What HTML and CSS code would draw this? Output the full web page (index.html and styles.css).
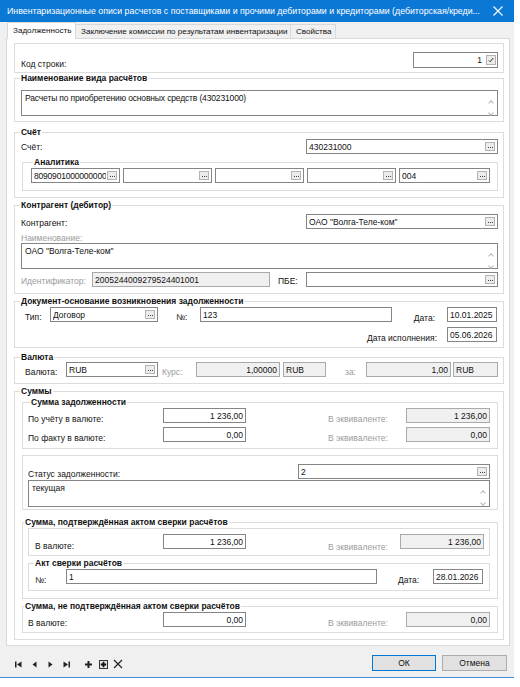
FILE: index.html
```html
<!DOCTYPE html>
<html lang="ru">
<head>
<meta charset="utf-8">
<title>Инвентаризационные описи</title>
<link rel="stylesheet" href="styles.css">
</head>
<body>
<div class="window">
  <div class="titlebar">
    <span class="title">Инвентаризационные описи расчетов с поставщиками и прочими дебиторами и кредиторами (дебиторская/креди...</span>
    <svg class="close" width="10" height="10" viewBox="0 0 10 10"><path d="M0.5 0.5L9.5 9.5M9.5 0.5L0.5 9.5" stroke="#fff" stroke-width="1.1"/></svg>
  </div>
  <div class="tabs">
    <div class="tab active t1">Задолженность</div>
    <div class="tab t2">Заключение комиссии по результатам инвентаризации</div>
    <div class="tab t3">Свойства</div>
  </div>
  <div class="page">
    <div class="frame fa">
      <div class="row r-kod">
        <span class="lbl l-kod">Код строки:</span>
        <div class="inp num w85"><span class="v">1</span><span class="chk"><svg width="6" height="6" viewBox="0 0 6 6"><path d="M0.8 3.4L2.2 4.8L5.2 1" fill="none" stroke="#333" stroke-width="1"/></svg></span></div>
      </div>
    </div>

    <fieldset class="grp g-naim">
      <legend>Наименование вида расчётов</legend>
      <div class="ta ta-naim"><span class="v">Расчеты по приобретению основных средств (430231000)</span><span class="sb"><i class="up"></i><i class="dn"></i></span></div>
    </fieldset>

    <fieldset class="grp g-schet">
      <legend>Счёт</legend>
      <div class="row r-schet">
        <span class="lbl l-285">Счёт:</span>
        <div class="inp w192"><span class="v">430231000</span><span class="dots"></span></div>
      </div>
      <fieldset class="grp sub g-anal">
        <legend class="lg-anal">Аналитика</legend>
        <div class="row r-anal">
          <div class="inp w89"><span class="v tight">8090901000000000</span><span class="dots"></span></div>
          <div class="inp w89 gap3"><span class="v"></span><span class="dots"></span></div>
          <div class="inp w89 gap3"><span class="v"></span><span class="dots"></span></div>
          <div class="inp w89 gap3"><span class="v"></span><span class="dots"></span></div>
          <div class="inp w91 gap3"><span class="v">004</span><span class="dots"></span></div>
        </div>
      </fieldset>
    </fieldset>

    <fieldset class="grp g-kontr">
      <legend>Контрагент (дебитор)</legend>
      <div class="row r-kontr">
        <span class="lbl l-285 lm4">Контрагент:</span>
        <div class="inp w192"><span class="v">ОАО "Волга-Теле-ком"</span><span class="dots"></span></div>
      </div>
      <div class="sublbl">Наименование:</div>
      <div class="ta ro ta-name"><span class="v">ОАО "Волга-Теле-ком"</span><span class="sb"><i class="up"></i><i class="dn"></i></span></div>
      <div class="row r-ident">
        <span class="lbl gray l-ident">Идентификатор:</span>
        <div class="inp ro w178"><span class="v">2005244009279524401001</span></div>
        <span class="lbl l-pbe">ПБЕ:</span>
        <div class="inp w192"><span class="v"></span><span class="dots"></span></div>
      </div>
    </fieldset>

    <fieldset class="grp g-doc">
      <legend>Документ-основание возникновения задолженности</legend>
      <div class="row r-doc1">
        <span class="lbl l-tip">Тип:</span>
        <div class="inp w108"><span class="v">Договор</span><span class="dots"></span></div>
        <span class="lbl l-nom">№:</span>
        <div class="inp w192"><span class="v">123</span></div>
        <span class="lbl l-data">Дата:</span>
        <div class="inp w50 ml12"><span class="v">10.01.2025</span></div>
      </div>
      <div class="row r-doc2">
        <span class="lbl l-dataisp">Дата исполнения:</span>
        <div class="inp w50"><span class="v">05.06.2026</span></div>
      </div>
    </fieldset>

    <fieldset class="grp g-val">
      <legend>Валюта</legend>
      <div class="row r-val">
        <span class="lbl l-val">Валюта:</span>
        <div class="inp w92"><span class="v">RUB</span><span class="dots"></span></div>
        <span class="lbl gray l-kurs">Курс:</span>
        <div class="inp ro num w84"><span class="v">1,00000</span></div>
        <div class="inp ro w43 ml3"><span class="v">RUB</span></div>
        <span class="lbl gray l-za">за:</span>
        <div class="inp ro num w85"><span class="v">1,00</span></div>
        <div class="inp ro w45 ml2"><span class="v">RUB</span></div>
      </div>
    </fieldset>

    <fieldset class="grp g-sum">
      <legend>Суммы</legend>
      <fieldset class="grp sub g-sz">
        <legend class="lg-sz">Сумма задолженности</legend>
        <div class="row">
          <span class="lbl l-sum">По учёту в валюте:</span>
          <div class="inp num w83"><span class="v">1 236,00</span></div>
          <span class="lbl gray l-ekv">В эквиваленте:</span>
          <div class="inp ro num w84"><span class="v">1 236,00</span></div>
        </div>
        <div class="row r-fact">
          <span class="lbl l-sum">По факту в валюте:</span>
          <div class="inp num w83"><span class="v">0,00</span></div>
          <span class="lbl gray l-ekv">В эквиваленте:</span>
          <div class="inp ro num w84"><span class="v">0,00</span></div>
        </div>
      </fieldset>

      <div class="frame sub fs-status">
        <div class="row r-status">
          <span class="lbl l-status">Статус задолженности:</span>
          <div class="inp w192"><span class="v">2</span><span class="dots"></span></div>
        </div>
        <div class="ta ro ta-status"><span class="v">текущая</span><span class="sb"><i class="up"></i><i class="dn"></i></span></div>
      </div>

      <fieldset class="grp sub g-sp">
        <legend class="lg-sp">Сумма, подтверждённая актом сверки расчётов</legend>
        <div class="frame inner fs-sp">
          <div class="row r-sp">
            <span class="lbl l-sp">В валюте:</span>
            <div class="inp num w83"><span class="v">1 236,00</span></div>
            <span class="lbl gray l-ekv2">В эквиваленте:</span>
            <div class="inp ro num w84"><span class="v">1 236,00</span></div>
          </div>
        </div>
        <fieldset class="grp inner g-akt">
          <legend class="lg-akt">Акт сверки расчётов</legend>
          <div class="row">
            <span class="lbl l-aktn">№:</span>
            <div class="inp w311"><span class="v">1</span></div>
            <span class="lbl l-aktd">Дата:</span>
            <div class="inp w50"><span class="v">28.01.2026</span></div>
          </div>
        </fieldset>
      </fieldset>

      <fieldset class="grp sub g-sn">
        <legend class="lg-sp">Сумма, не подтверждённая актом сверки расчётов</legend>
        <div class="row r-sn">
          <span class="lbl l-sum">В валюте:</span>
          <div class="inp num w83"><span class="v">0,00</span></div>
          <span class="lbl gray l-ekv">В эквиваленте:</span>
          <div class="inp ro num w84"><span class="v">0,00</span></div>
        </div>
      </fieldset>
    </fieldset>
  </div>

  <div class="bottombar">
    <div class="navicons">
      <svg class="ic ic1" width="7" height="7" viewBox="0 0 7 7"><rect x="0" y="0.5" width="1.5" height="6" fill="#222"/><path d="M6.5 0.5V6.5L2 3.5Z" fill="#222"/></svg>
      <svg class="ic ic2" width="5" height="7" viewBox="0 0 5 7"><path d="M4.5 0.5V6.5L0.5 3.5Z" fill="#222"/></svg>
      <svg class="ic ic3" width="5" height="7" viewBox="0 0 5 7"><path d="M0.5 0.5V6.5L4.5 3.5Z" fill="#222"/></svg>
      <svg class="ic ic4" width="7" height="7" viewBox="0 0 7 7"><path d="M0.5 0.5V6.5L5 3.5Z" fill="#222"/><rect x="5.5" y="0.5" width="1.5" height="6" fill="#222"/></svg>
      <svg class="ic ic5" width="7" height="7" viewBox="0 0 7 7"><path d="M2.5 0H4.5V2.5H7V4.5H4.5V7H2.5V4.5H0V2.5H2.5Z" fill="#222"/></svg>
      <svg class="ic ic6" width="9" height="9" viewBox="0 0 9 9"><rect x="0.5" y="0.5" width="8" height="8" fill="#e8e8e8" stroke="#333"/><path d="M3.6 1.8H5.4V3.6H7.2V5.4H5.4V7.2H3.6V5.4H1.8V3.6H3.6Z" fill="#111"/></svg>
      <svg class="ic ic7" width="10" height="10" viewBox="0 0 10 10"><path d="M1 1L9 9M9 1L1 9" stroke="#222" stroke-width="1.2"/></svg>
    </div>
    <div class="buttons">
      <div class="btn default">ОК</div>
      <div class="btn">Отмена</div>
    </div>
  </div>
</div>
</body>
</html>
```

FILE: styles.css
```css
* { box-sizing: border-box; }
html, body { margin: 0; padding: 0; }
fieldset { margin: 0; }
body {
  width: 520px; height: 687px; overflow: hidden; background: #fff;
  font-family: "Liberation Sans", Arial, sans-serif; font-size: 8.5px; color: #111;
}
.window {
  width: 514px; height: 678px; background: #f0f0f0;
  border-bottom: 1px solid #3a8ed6;
  display: flex; flex-direction: column;
}
.titlebar {
  flex: none; height: 22px; background: #0b78d5; color: #fff;
  display: flex; align-items: center; padding-left: 7px;
}
.title { flex: 1; font-size: 8.8px; white-space: nowrap; overflow: hidden; }
.close { flex: none; margin-right: 11px; }

.tabs {
  flex: none; height: 16px; display: flex; align-items: flex-end;
  margin-left: 7px; position: relative; z-index: 1; font-size: 8.1px;
}
.tab {
  height: 14px; border: 1px solid #d9d9d9; border-bottom: none; background: #f0f0f0;
  padding-left: 5px; line-height: 13px; white-space: nowrap; overflow: hidden;
}
.tab.active { height: 17px; margin-bottom: -1px; background: #fff; line-height: 15px; }
.t1 { width: 69px; }
.t2 { width: 215px; border-left: none; }
.t3 { width: 45px; border-left: none; }

.page {
  flex: none; margin-left: 6px; width: 504px; height: 608px;
  border: 1px solid #d9d9d9; background: #fff; padding: 4px 0 0 7px;
}

.frame { border: 1px solid #dcdcdc; }
.grp { border: 1px solid #dcdcdc; padding: 0; min-width: 0; }
legend {
  font-weight: bold; line-height: 11px; padding: 0 1px; margin-left: 5px; color: #111;
}
.fa, .grp { width: 490px; }
.sub { width: 476px; margin-left: 7px; }
.inner { width: 462px; margin-left: 5px; }

.row { display: flex; align-items: flex-start; }
.lbl { flex: none; line-height: 11px; margin-top: 4px; white-space: nowrap; }
.gray { color: #9b9b9b; }

.inp {
  flex: none; height: 15px; border: 1px solid #858585; background: #fff;
  display: flex; align-items: center; padding: 0 1px 0 2px; overflow: hidden; white-space: nowrap;
}
.inp .v { flex: 1; overflow: hidden; white-space: nowrap; }
.inp .tight { letter-spacing: -0.2px; }
.num .v { text-align: right; padding-right: 1px; }
.ro { background: #f0f0f0; border-color: #a9a9a9; }
.dots {
  flex: none; width: 10px; height: 9px; border: 1px solid #b3b3b3; background: #ececec;
  margin-left: 1px; margin-right: 1px; display: flex; align-items: center; justify-content: center;
}
.dots::after {
  content: ""; width: 1px; height: 1px; background: #444;
  box-shadow: 2px 0 #444, -2px 0 #444; margin-top: 2px;
}
.chk {
  flex: none; width: 10px; height: 10px; border: 1px solid #b3b3b3; background: #ececec;
  margin-left: 3px; display: flex; align-items: center; justify-content: center;
}

.ta {
  height: 26px; border: 1px solid #858585; background: #fff;
  display: flex; padding: 2px 0 0 3px;
}
.ta .v { flex: 1; }
.ta-naim .v { letter-spacing: -0.15px; }
.sb {
  flex: none; width: 12px; display: flex; flex-direction: column; align-items: center;
  padding-top: 6px; gap: 6px;
}
.sb i { display: block; width: 4px; height: 4px; border: solid #b5b5b5; border-width: 1px 0 0 1px; }
.sb .up { transform: rotate(45deg); margin-top: 2px; }
.sb .dn { transform: rotate(225deg); }

/* widths */
.w43 { width: 43px; } .w45 { width: 45px; } .w50 { width: 50px; }
.w83 { width: 83px; } .w84 { width: 84px; } .w85 { width: 85px; }
.w89 { width: 89px; } .w91 { width: 91px; } .w92 { width: 92px; }
.w108 { width: 108px; } .w178 { width: 178px; } .w192 { width: 192px; }
.w311 { width: 311px; }
.gap3 { margin-left: 3px; } .ml2 { margin-left: 2px; } .ml3 { margin-left: 3px; } .ml12 { margin-left: 12px; }

/* frame A */
.fa { height: 30px; }
.r-kod { margin-top: 8px; }
.r-kod .inp { height: 16px; }
.l-kod { width: 392px; margin-left: 6px; margin-top: 7px; }

/* naim */
.g-naim { height: 49px; }
.ta-naim { width: 477px; margin-left: 6px; margin-top: 6px; }

/* schet */
.g-schet { height: 71px; margin-top: 5px; }
.r-schet { margin-top: 1px; }
.l-285 { width: 285px; margin-left: 6px; margin-top: 3px; }
.g-anal { height: 34px; margin-top: 3px; }
.lg-anal { margin-left: 10px; }
.r-anal { margin-left: 8px; }

/* kontragent */
.g-kontr { height: 94px; margin-top: 2px; }
.r-kontr { margin-top: 3px; }
.lm4 { margin-top: 4px; }
.sublbl { color: #9b9b9b; line-height: 9px; margin: 5px 0 0 6px; }
.ta-name { width: 477px; margin-left: 6px; }
.r-ident { margin-top: 3px; }
.l-ident { width: 71px; margin-left: 6px; }
.l-pbe { width: 28px; margin-left: 8px; }

/* document */
.g-doc { height: 52px; margin-top: 2px; }
.l-tip { width: 25px; margin-left: 10px; margin-top: 5px; }
.l-nom { width: 24px; margin-left: 18px; margin-top: 5px; }
.l-data { width: 43px; text-align: right; margin-top: 6px; }
.r-doc2 { margin-top: 3px; }
.l-dataisp { width: 432px; text-align: right; padding-right: 10px; margin-top: 6px; }

/* valuta */
.g-val { height: 32px; margin-top: 4px; }
.r-val { margin-top: -1px; }
.l-val { width: 41px; margin-left: 10px; margin-top: 5px; }
.l-kurs { width: 34px; margin-left: 4px; margin-top: 5px; }
.l-za { width: 21px; margin-left: 19px; margin-top: 5px; }

/* summy */
.g-sum { height: 254px; margin-top: 2px; }
.g-sz { height: 52px; }
.lg-sz { margin-left: 7px; }
.l-sum { width: 135px; margin-left: 5px; margin-top: 6px; }
.l-ekv { width: 78px; margin-left: 82px; margin-top: 6px; }
.r-fact { margin-top: 2px; }

.fs-status { height: 55px; margin-top: 6px; }
.r-status { margin-top: 8px; }
.l-status { width: 270px; margin-left: 5px; margin-top: 5px; }
.ta-status { width: 462px; height: 27px; margin-left: 5px; }

.g-sp { height: 82px; margin-top: 7px; }
.lg-sp { margin-left: 1px; }
.fs-sp { height: 28px; }
.r-sp { margin-top: 5px; }
.l-sp { width: 128px; margin-left: 6px; margin-top: 7px; }
.l-ekv2 { width: 72px; margin-left: 82px; margin-top: 8px; }
.g-akt { height: 33px; margin-top: 2px; }
.lg-akt { margin-left: 5px; }
.l-aktn { width: 31px; margin-left: 6px; margin-top: 6px; }
.l-aktd { width: 35px; margin-left: 21px; margin-top: 6px; }

.g-sn { height: 32px; margin-top: 2px; }
.r-sn { margin-top: 0; }

/* bottom bar */
.bottombar { flex: 1; display: flex; align-items: flex-start; }
.navicons { display: flex; align-items: center; margin-top: 13px; height: 10px; }
.ic { flex: none; }
.ic1 { margin-left: 15px; }
.ic2 { margin-left: 10px; }
.ic3 { margin-left: 11px; }
.ic4 { margin-left: 10px; }
.ic5 { margin-left: 15px; }
.ic6 { margin-left: 7px; }
.ic7 { margin-left: 5px; }
.buttons { margin-left: auto; margin-right: 7px; margin-top: 9px; display: flex; gap: 6px; }
.btn {
  width: 64px; height: 16px; border: 1px solid #adadad; background: #e1e1e1;
  display: flex; align-items: center; justify-content: center;
}
.btn + .btn { width: 65px; }
.btn.default { border-color: #0078d7; }
```
